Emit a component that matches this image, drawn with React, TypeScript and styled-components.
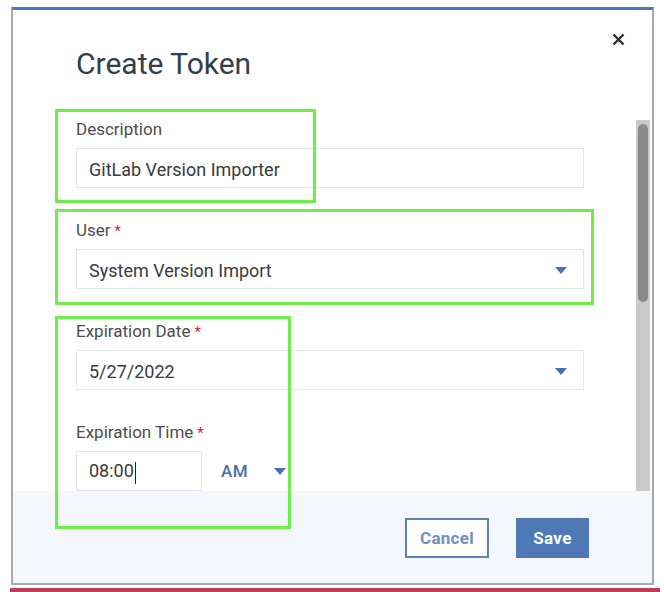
import styled, { createGlobalStyle } from 'styled-components';

const GlobalStyle = createGlobalStyle`
  html, body {
    margin: 0;
    padding: 0;
    background: #ffffff;
  }
  * {
    box-sizing: border-box;
  }
`;

const Page = styled.div`
  position: relative;
  width: 664px;
  height: 592px;
  padding: 7px 0 0 11px;
  font-family: Roboto, "Liberation Sans", sans-serif;
  overflow: hidden;
`;

const Dialog = styled.div`
  position: relative;
  width: 643px;
  height: 578px;
  border-top: 3px solid #4a78c0;
  border-left: 2px solid #a9a9a9;
  border-right: 2px solid #a9a9a9;
  border-bottom: 2px solid #a9a9a9;
  background: #ffffff;
  display: flex;
  flex-direction: column;
`;

const Header = styled.div`
  height: 102px;
  padding: 36px 0 0 63px;
  flex-shrink: 0;
`;

const Title = styled.h2`
  margin: 0;
  font-size: 30px;
  line-height: 36px;
  font-weight: 400;
  color: #323f4b;
`;

const CloseButton = styled.button`
  position: absolute;
  top: 22px;
  right: 27px;
  width: 14px;
  height: 14px;
  padding: 0;
  border: none;
  background: none;
  display: flex;
  align-items: center;
  justify-content: center;
`;

const Body = styled.div`
  flex: 1;
  display: flex;
  overflow: hidden;
  min-height: 0;
`;

const Content = styled.div`
  flex: 1;
  padding: 6px 0 0 63px;
`;

const ScrollTrack = styled.div`
  width: 14px;
  margin: 8px 2px 0 0;
  background: #c9c9c9;
  padding: 4px 2px;
`;

const ScrollThumb = styled.div`
  height: 178px;
  border-radius: 5px;
  background: #8b8b8b;
`;

const Field = styled.div`
  width: 508px;
  margin-bottom: 31px;
`;

const Label = styled.div`
  height: 23px;
  font-size: 17px;
  line-height: 23px;
  color: #4d4d4d;
  margin-bottom: 7px;
  white-space: nowrap;
`;

const Required = styled.span`
  color: #da1e28;
  margin-left: 4px;
  font-size: 15px;
  line-height: 1;
`;

const Input = styled.div<{ $width?: number }>`
  width: ${p => (p.$width ? `${p.$width}px` : '100%')};
  height: 40px;
  flex-shrink: 0;
  border: 1px solid #e3e5e8;
  background: #ffffff;
  display: flex;
  align-items: center;
  justify-content: space-between;
  padding: 2px 16px 0 12px;
  font-size: 18px;
  color: #3a3a3a;
`;

const Caret = styled.span`
  display: inline-block;
  width: 1px;
  height: 22px;
  background: #222;
  margin-left: 1px;
  vertical-align: middle;
`;

const Arrow = styled.span`
  width: 0;
  height: 0;
  border-left: 6px solid transparent;
  border-right: 6px solid transparent;
  border-top: 7px solid #4a6fb0;
`;

const TimeRow = styled.div`
  display: flex;
  align-items: center;
`;

const Meridiem = styled.div`
  display: flex;
  align-items: center;
  gap: 26px;
  margin-left: 19px;
  font-size: 17px;
  font-weight: 500;
  color: #4a6fa8;
  letter-spacing: 0.5px;
`;

const Footer = styled.div`
  height: 92px;
  flex-shrink: 0;
  background: #f4f7fb;
  display: flex;
  justify-content: flex-end;
  align-items: flex-start;
  gap: 27px;
  padding: 27px 63px 0 0;
`;

const Button = styled.button<{ $primary?: boolean }>`
  height: 40px;
  width: ${p => (p.$primary ? '73px' : '84px')};
  font-family: Roboto, "Liberation Sans", sans-serif;
  font-size: 17px;
  font-weight: 700;
  letter-spacing: 0.3px;
  border: 2px solid ${p => (p.$primary ? '#4e78b6' : '#5b80bb')};
  background: ${p => (p.$primary ? '#4e78b6' : '#ffffff')};
  color: ${p => (p.$primary ? '#ffffff' : '#7190c4')};
  padding: 0;
`;

const Highlight = styled.div<{ $l: number; $t: number; $w: number; $h: number }>`
  position: absolute;
  left: ${p => p.$l}px;
  top: ${p => p.$t}px;
  width: ${p => p.$w}px;
  height: ${p => p.$h}px;
  border: 3px solid #6cef48;
  pointer-events: none;
`;

const BottomRule = styled.div`
  width: 650px;
  height: 4px;
  margin: 3px 0 0 -1px;
  background: #c23b5a;
`;

export default function App() {
  return (
    <>
      <GlobalStyle />
      <Page>
        <Dialog>
          <Header>
            <Title>Create Token</Title>
          </Header>
          <CloseButton aria-label="Close">
            <svg width="13" height="13" viewBox="0 0 13 13">
              <path d="M1.5 1.5 L11.5 11.5 M11.5 1.5 L1.5 11.5" stroke="#2b2b2b" strokeWidth="2.4" />
            </svg>
          </CloseButton>
          <Body>
            <Content>
              <Field>
                <Label>Description</Label>
                <Input>GitLab Version Importer</Input>
              </Field>
              <Field>
                <Label>
                  User<Required>*</Required>
                </Label>
                <Input>
                  System Version Import
                  <Arrow />
                </Input>
              </Field>
              <Field>
                <Label>
                  Expiration Date<Required>*</Required>
                </Label>
                <Input>
                  5/27/2022
                  <Arrow />
                </Input>
              </Field>
              <Field>
                <Label>
                  Expiration Time<Required>*</Required>
                </Label>
                <TimeRow>
                  <Input $width={126}>
                    <span>
                      08:00
                      <Caret />
                    </span>
                  </Input>
                  <Meridiem>
                    AM
                    <Arrow />
                  </Meridiem>
                </TimeRow>
              </Field>
            </Content>
            <ScrollTrack>
              <ScrollThumb />
            </ScrollTrack>
          </Body>
          <Footer>
            <Button>Cancel</Button>
            <Button $primary>Save</Button>
          </Footer>
        </Dialog>
        <BottomRule />
        <Highlight $l={55} $t={109} $w={261} $h={94} />
        <Highlight $l={55} $t={209} $w={539} $h={96} />
        <Highlight $l={55} $t={316} $w={236} $h={213} />
      </Page>
    </>
  );
}
